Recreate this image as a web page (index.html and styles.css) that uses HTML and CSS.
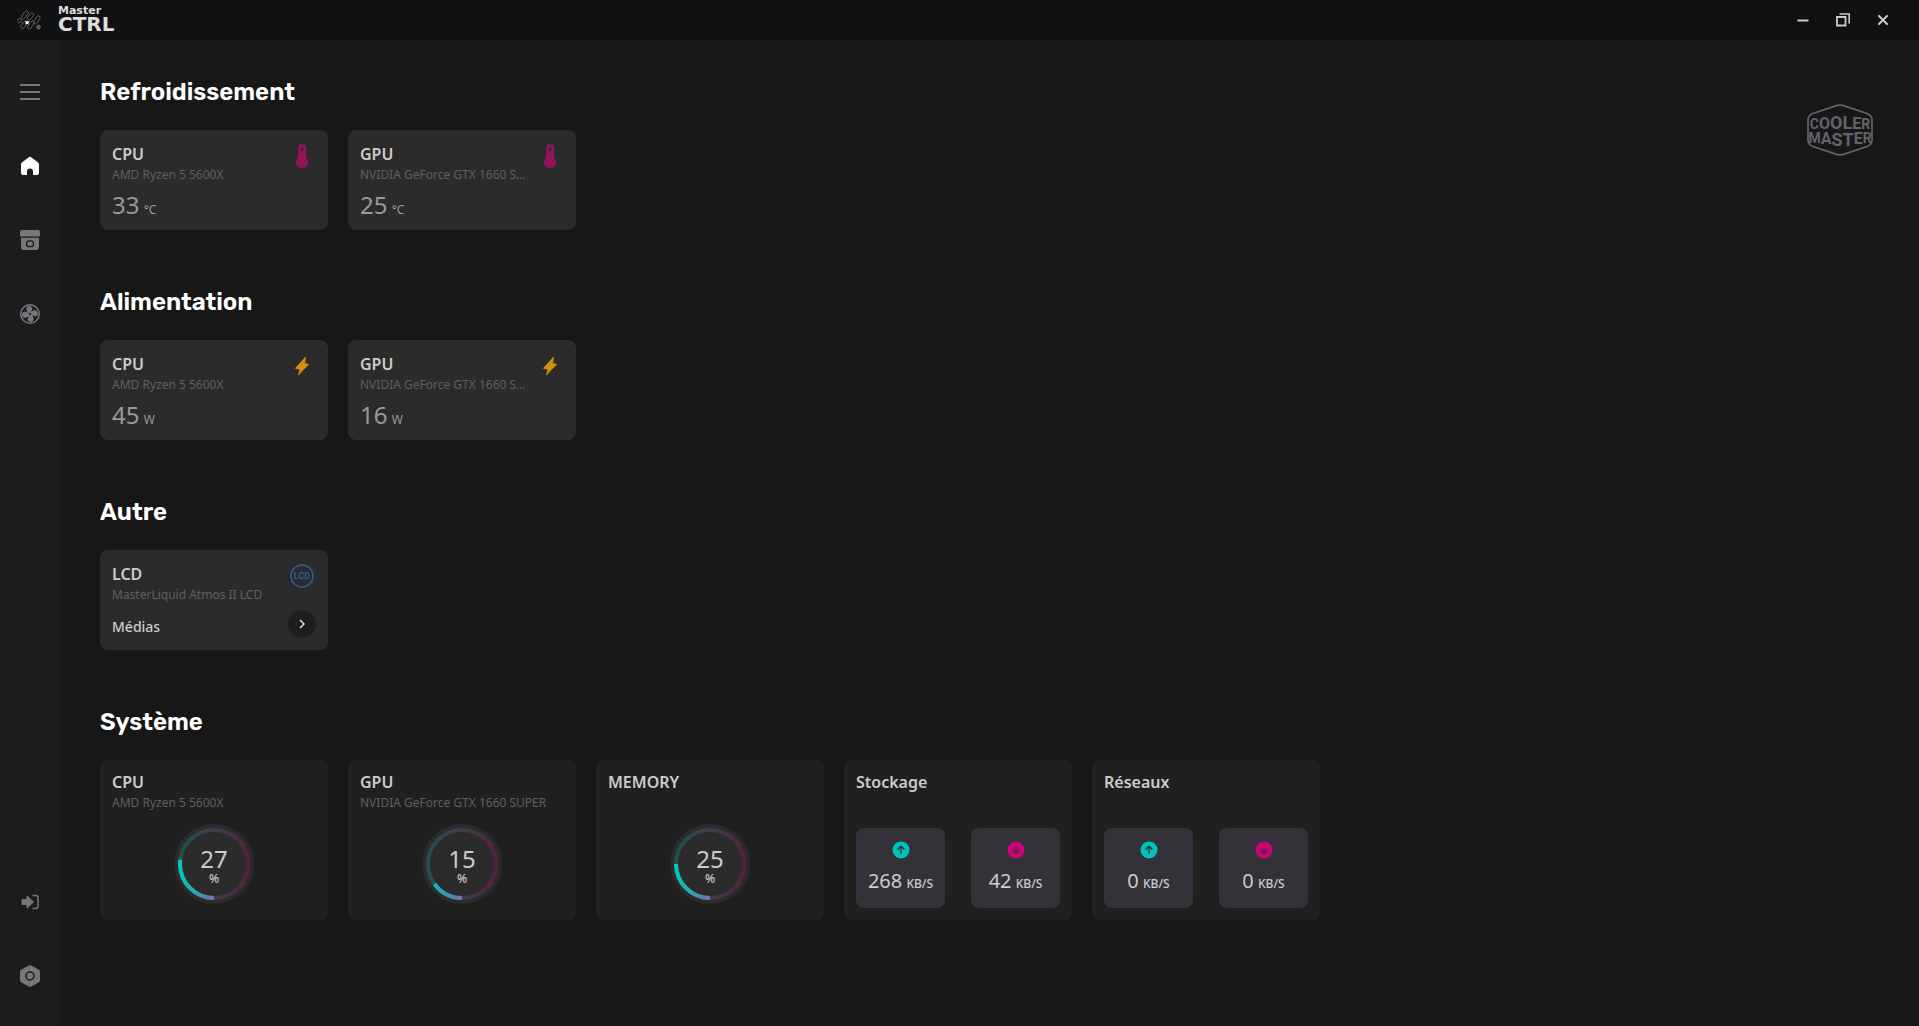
FILE: index.html
```html
<!DOCTYPE html>
<html lang="fr">
<head>
<meta charset="utf-8">
<meta name="viewport" content="width=device-width, initial-scale=1">
<title>MasterCTRL</title>
<link rel="stylesheet" href="styles.css">
</head>
<body>
<svg class="defs" width="0" height="0" aria-hidden="true">
  <defs>
    <linearGradient id="ring" gradientUnits="userSpaceOnUse" x1="6" y1="0" x2="74" y2="0">
      <stop offset="0" stop-color="#00c8c0"/><stop offset="0.5" stop-color="#7070aa"/><stop offset="1" stop-color="#d6007f"/>
    </linearGradient>
    <symbol id="thermo" viewBox="0 0 24 24">
      <path fill="#8f1459" fill-rule="evenodd" d="M12 0a4 4 0 0 0-4 4v9.500a6 6 0 1 0 8 0V4a4 4 0 0 0-4-4zm0 3.300a1.100 1.100 0 0 1 1.100 1.100v2a1.100 1.100 0 0 1-2.200 0v-2A1.100 1.100 0 0 1 12 3.300z"/>
    </symbol>
    <symbol id="bolt" viewBox="0 0 24 24">
      <path fill="#cf900d" stroke="#cf900d" stroke-width="0.800" stroke-linejoin="round" d="M15.500 3L5.500 14.300l4.700 1.300L8.300 21 18.600 10.400l-4-.9z"/>
    </symbol>
    <symbol id="up" viewBox="0 0 18 18">
      <circle cx="9" cy="9" r="8.500" fill="#00c4bb"/>
      <path d="M9 13V5.500M5.500 8.800L9 5.300l3.500 3.500" fill="none" stroke="#333238" stroke-width="1.400"/>
    </symbol>
    <symbol id="down" viewBox="0 0 18 18">
      <circle cx="9" cy="9" r="8.500" fill="#d2007a"/>
      <path d="M9 5v7.500M5.500 9.200L9 12.700l3.500-3.500" fill="none" stroke="#333238" stroke-width="1.400"/>
    </symbol>
  </defs>
</svg>

<header class="titlebar">
  <svg class="titlebar-mark" viewBox="0 0 24 20" fill="none" stroke="#77777a" stroke-width="0.700">
    <rect x="6" y="0.500" width="3.600" height="9" rx="1.800" transform="rotate(35 8 5)"/>
    <rect x="12" y="2.500" width="3.600" height="8" rx="1.800" transform="rotate(35 14 6)"/>
    <rect x="18" y="5.500" width="3.600" height="9" rx="1.800" transform="rotate(35 20 10)"/>
    <rect x="5" y="11" width="3.600" height="8" rx="1.800" transform="rotate(35 7 15)"/>
    <rect x="12" y="10.500" width="3.600" height="9" rx="1.800" transform="rotate(35 14 15)"/>
    <circle cx="2.700" cy="10.500" r="2"/>
    <circle cx="21.500" cy="17" r="1.900" fill="#555"/>
    <path d="M9.800 10l1 1.600 1.800-.5-1.200 1.800.4 1.900-1.700-1-2 .8.800-1.900-1.100-1.400 1.800.1z" fill="#fff" stroke="none"/>
  </svg>
  <div class="brand"><span class="brand-top">Master</span><span class="brand-main">CTRL</span></div>
  <div class="window-controls">
    <button type="button" aria-label="Réduire"><svg width="14" height="14" viewBox="0 0 14 14"><path d="M1.500 7.500h11" stroke="#ccc" stroke-width="2"/></svg></button>
    <button type="button" aria-label="Restaurer"><svg width="14" height="14" viewBox="0 0 14 14" fill="none" stroke="#ccc"><path d="M1 4h8.500v8.500H1z" stroke-width="1.800"/><path d="M3.500 1h9.700v9.500" stroke-width="1.600"/></svg></button>
    <button type="button" aria-label="Fermer"><svg width="14" height="14" viewBox="0 0 14 14"><path d="M3 3l8 8M11 3l-8 8" stroke="#ccc" stroke-width="2" stroke-linecap="round"/></svg></button>
  </div>
</header>

<div class="shell">
  <nav class="sidebar" aria-label="Navigation">
    <button type="button" aria-label="Menu"><svg viewBox="0 0 24 24"><path d="M2 5h20M2 12h20M2 19h20" stroke="#77767c" stroke-width="2"/></svg></button>
    <button type="button" aria-label="Accueil"><svg viewBox="0 0 24 24"><path fill="#fff" d="M10.500 3.400a2.400 2.400 0 0 1 3 0l6.300 4.900A3 3 0 0 1 21 10.700V19a2 2 0 0 1-2 2h-4v-3.500a3 3 0 0 0-6 0V21H5a2 2 0 0 1-2-2v-8.300a3 3 0 0 1 1.200-2.400z"/></svg></button>
    <button type="button" aria-label="Appareils"><svg viewBox="0 0 24 24"><path fill="#77767c" fill-rule="evenodd" d="M4 2h16a2 2 0 0 1 2 2v4.500H2V4a2 2 0 0 1 2-2zM3 9.800h18V19a3 3 0 0 1-3 3H6a3 3 0 0 1-3-3z"/><rect x="8.500" y="12.800" width="7" height="5.800" rx="2.700" fill="none" stroke="#1c1c1c" stroke-width="1.300"/></svg></button>
    <button type="button" aria-label="Ventilateurs"><svg viewBox="0 0 24 24"><circle cx="12" cy="12" r="9.300" fill="none" stroke="#77767c" stroke-width="1.500"/><g fill="#77767c"><path id="blade" d="M10.600 11.400C9 10 7.800 7.700 8.600 5.700c.9-2.200 5-2.200 5.700.2.500 1.900-1.300 2.600-.9 4.700z"/><use href="#blade" transform="rotate(90 12 12)"/><use href="#blade" transform="rotate(180 12 12)"/><use href="#blade" transform="rotate(270 12 12)"/></g><circle cx="12" cy="12" r="1" fill="#1c1c1c"/></svg></button>
    <button type="button" class="sidebar-end" aria-label="Connexion"><svg viewBox="0 0 24 24"><path fill="#77767c" stroke="#77767c" stroke-linejoin="round" d="M4 9.500h5V5.800l6.500 6.200L9 18.200v-3.700H4z"/><path d="M14.500 5.500H18a2 2 0 0 1 2 2v9a2 2 0 0 1-2 2h-3.500" fill="none" stroke="#77767c" stroke-width="1.500"/></svg></button>
    <button type="button" aria-label="Paramètres"><svg viewBox="0 0 24 24"><path fill="#77767c" d="M10.600 1.600a3 3 0 0 1 2.800 0l7.100 4A3 3 0 0 1 22 8.200v7.600a3 3 0 0 1-1.500 2.600l-7.100 4a3 3 0 0 1-2.800 0l-7.100-4A3 3 0 0 1 2 15.800V8.200a3 3 0 0 1 1.500-2.600z"/><circle cx="12" cy="12" r="4" fill="none" stroke="#1c1c1c" stroke-width="1.500"/></svg></button>
  </nav>

  <main class="main">
    <div class="sections">
      <section>
        <h1>Refroidissement</h1>
        <div class="cards">
          <article class="card">
            <h2>CPU</h2><p class="device">AMD Ryzen 5 5600X</p>
            <p class="reading">33 <small>°C</small></p>
            <svg class="card-icon"><use href="#thermo"/></svg>
          </article>
          <article class="card">
            <h2>GPU</h2><p class="device">NVIDIA GeForce GTX 1660 SUPER</p>
            <p class="reading">25 <small>°C</small></p>
            <svg class="card-icon"><use href="#thermo"/></svg>
          </article>
        </div>
      </section>
      <section>
        <h1>Alimentation</h1>
        <div class="cards">
          <article class="card">
            <h2>CPU</h2><p class="device">AMD Ryzen 5 5600X</p>
            <p class="reading">45 <small>W</small></p>
            <svg class="card-icon"><use href="#bolt"/></svg>
          </article>
          <article class="card">
            <h2>GPU</h2><p class="device">NVIDIA GeForce GTX 1660 SUPER</p>
            <p class="reading">16 <small>W</small></p>
            <svg class="card-icon"><use href="#bolt"/></svg>
          </article>
        </div>
      </section>
      <section>
        <h1>Autre</h1>
        <div class="cards">
          <article class="card">
            <h2>LCD</h2><p class="device">MasterLiquid Atmos II LCD</p>
            <p class="media">Médias</p>
            <svg class="card-icon" viewBox="0 0 24 24"><circle cx="12" cy="12" r="11" fill="none" stroke="#285f98" stroke-width="1.500"/><text class="lcd-text" x="12" y="15" text-anchor="middle">LCD</text></svg>
            <button type="button" class="open" aria-label="Ouvrir les médias"><svg width="14" height="14" viewBox="0 0 14 14"><path d="M5 3l4 4-4 4" fill="none" stroke="#ddd" stroke-width="1.500"/></svg></button>
          </article>
        </div>
      </section>
      <section>
        <h1>Système</h1>
        <div class="cards">
          <article class="card system">
            <h2>CPU</h2><p class="device">AMD Ryzen 5 5600X</p>
            <div class="gauge"><svg viewBox="0 0 80 80"><circle class="track" cx="40" cy="40" r="34"/><path class="arc" d="M40 74A34 34 0 0 1 40 6A34 34 0 0 1 40 74" pathLength="100" stroke-dasharray="27 100"/></svg><p>27<small>%</small></p></div>
          </article>
          <article class="card system">
            <h2>GPU</h2><p class="device">NVIDIA GeForce GTX 1660 SUPER</p>
            <div class="gauge"><svg viewBox="0 0 80 80"><circle class="track" cx="40" cy="40" r="34"/><path class="arc" d="M40 74A34 34 0 0 1 40 6A34 34 0 0 1 40 74" pathLength="100" stroke-dasharray="15 100"/></svg><p>15<small>%</small></p></div>
          </article>
          <article class="card system">
            <h2>MEMORY</h2>
            <div class="gauge"><svg viewBox="0 0 80 80"><circle class="track" cx="40" cy="40" r="34"/><path class="arc" d="M40 74A34 34 0 0 1 40 6A34 34 0 0 1 40 74" pathLength="100" stroke-dasharray="25 100"/></svg><p>25<small>%</small></p></div>
          </article>
          <article class="card system">
            <h2>Stockage</h2>
            <div class="rates">
              <div class="rate"><svg><use href="#up"/></svg><p>268 <small>KB/S</small></p></div>
              <div class="rate"><svg><use href="#down"/></svg><p>42 <small>KB/S</small></p></div>
            </div>
          </article>
          <article class="card system">
            <h2>Réseaux</h2>
            <div class="rates">
              <div class="rate"><svg><use href="#up"/></svg><p>0 <small>KB/S</small></p></div>
              <div class="rate"><svg><use href="#down"/></svg><p>0 <small>KB/S</small></p></div>
            </div>
          </article>
        </div>
      </section>
    </div>
    <svg class="cm-logo" viewBox="0 0 66 52" role="img" aria-label="Cooler Master">
      <path d="M28 2.200Q33 .2 38 2.200L60 9.500Q65 11.500 65 16V36Q65 40.500 60 42.500L38 49.800Q33 51.800 28 49.800L6 42.500Q1 40.500 1 36V16Q1 11.500 6 9.500z" fill="none" stroke="#63626a" stroke-width="1.800"/>
      <g class="cm-text" text-anchor="middle">
        <text x="33" y="25"><tspan font-size="14">C</tspan><tspan font-size="16">O</tspan><tspan font-size="18">OL</tspan><tspan font-size="16">E</tspan><tspan font-size="14">R</tspan></text>
        <text x="33" y="39"><tspan font-size="14">M</tspan><tspan font-size="16" dy="1">A</tspan><tspan font-size="18" dy="2">ST</tspan><tspan font-size="16" dy="-2">E</tspan><tspan font-size="14" dy="-1">R</tspan></text>
      </g>
    </svg>
  </main>
</div>
</body>
</html>
```

FILE: styles.css
```css
* { box-sizing: border-box; }

body {
  margin: 0;
  min-height: 100vh;
  display: flex;
  flex-direction: column;
  background: #171717;
  color: #ccc;
  font-family: "Noto Sans", "Open Sans", sans-serif;
}

h1, h2, p { margin: 0; }

button {
  border: 0;
  padding: 0;
  background: none;
  display: grid;
  place-items: center;
  cursor: pointer;
}

.defs { position: absolute; }

/* Title bar */
.titlebar {
  height: 40px;
  padding: 0 16px;
  display: flex;
  align-items: center;
  background: #111113;
}
.titlebar-mark { width: 26px; height: 20px; }
.brand {
  margin-left: 16px;
  display: flex;
  flex-direction: column;
  font-family: "DejaVu Sans", sans-serif;
  font-weight: 700;
  color: #ddd;
}
.brand-top { font-size: 11px; line-height: 8px; }
.brand-main { font-size: 20px; line-height: 18px; }
.window-controls { margin-left: auto; display: flex; }
.window-controls button { width: 40px; height: 40px; }

/* Layout */
.shell { flex: 1; display: flex; }
.sidebar {
  width: 60px;
  flex: none;
  padding: 40px 0 38px;
  display: flex;
  flex-direction: column;
  gap: 50px;
  background: #1c1c1c;
}
.sidebar button { height: 24px; }
.sidebar svg { width: 24px; height: 24px; }
.sidebar .sidebar-end { margin-top: auto; }
.main {
  flex: 1;
  padding: 36px 46px 36px 40px;
  display: flex;
  align-items: flex-start;
  justify-content: space-between;
}
.sections { display: flex; flex-direction: column; gap: 56px; }
.cm-logo { width: 66px; height: 52px; flex: none; margin-top: 28px; }
.cm-text {
  fill: #63626a;
  font-family: Roboto, "Liberation Sans", sans-serif;
  font-weight: 700;
}

/* Sections */
h1 {
  margin-bottom: 22px;
  font-family: Rubik, Roboto, sans-serif;
  font-size: 24px;
  font-weight: 600;
  line-height: 32px;
  color: #fff;
}
.cards { display: flex; flex-wrap: wrap; gap: 20px; }
.card {
  position: relative;
  width: 228px;
  min-height: 100px;
  padding: 12px 12px 0;
  border-radius: 8px;
  background: #2b2b2b;
}
h2 { font-size: 16px; font-weight: 600; line-height: 24px; }
.device {
  max-width: 170px;
  overflow: hidden;
  text-overflow: ellipsis;
  white-space: nowrap;
  font-size: 12px;
  line-height: 18px;
  color: #5f5f64;
}
.reading { font-size: 24px; line-height: 42px; color: #999; }
small { font-size: 12px; line-height: 1; }
.reading small { margin-left: -2px; }
.media { font-size: 14px; font-weight: 500; line-height: 46px; }
.card-icon {
  position: absolute;
  top: 14px;
  right: 14px;
  width: 24px;
  height: 24px;
}
.lcd-text {
  fill: #285f98;
  font-family: Roboto, "Liberation Sans", sans-serif;
  font-size: 9px;
  font-weight: 700;
}
.open {
  position: absolute;
  right: 12px;
  bottom: 12px;
  width: 28px;
  height: 28px;
  border-radius: 50%;
  background: #1e1e1e;
}

/* System cards */
.system {
  display: flex;
  flex-direction: column;
  min-height: 160px;
  padding: 10px 12px 12px;
  background: #202020;
}
.system .device { max-width: none; }
.gauge {
  width: 80px;
  height: 80px;
  margin: auto auto 4px;
  display: grid;
  place-items: center;
  border-radius: 50%;
  background: #2b2b2b;
}
.gauge > * { grid-area: 1 / 1; }
.gauge .track, .gauge .arc { fill: none; stroke: url(#ring); stroke-width: 4; }
.gauge .track { opacity: 0.25; }
.gauge p { padding-top: 4px; font-size: 24px; line-height: 26px; text-align: center; }
.gauge small { display: block; font-weight: 500; line-height: 14px; }
.rates {
  margin-top: auto;
  display: grid;
  grid-template-columns: 1fr 1fr;
  gap: 26px;
}
.rate {
  height: 80px;
  padding-top: 13px;
  display: flex;
  flex-direction: column;
  align-items: center;
  gap: 8px;
  border-radius: 8px;
  background: #333238;
}
.rate svg { width: 18px; height: 18px; }
.rate p { font-size: 20px; line-height: 28px; white-space: nowrap; }
.rate small { font-weight: 500; margin-left: -1px; }
```
